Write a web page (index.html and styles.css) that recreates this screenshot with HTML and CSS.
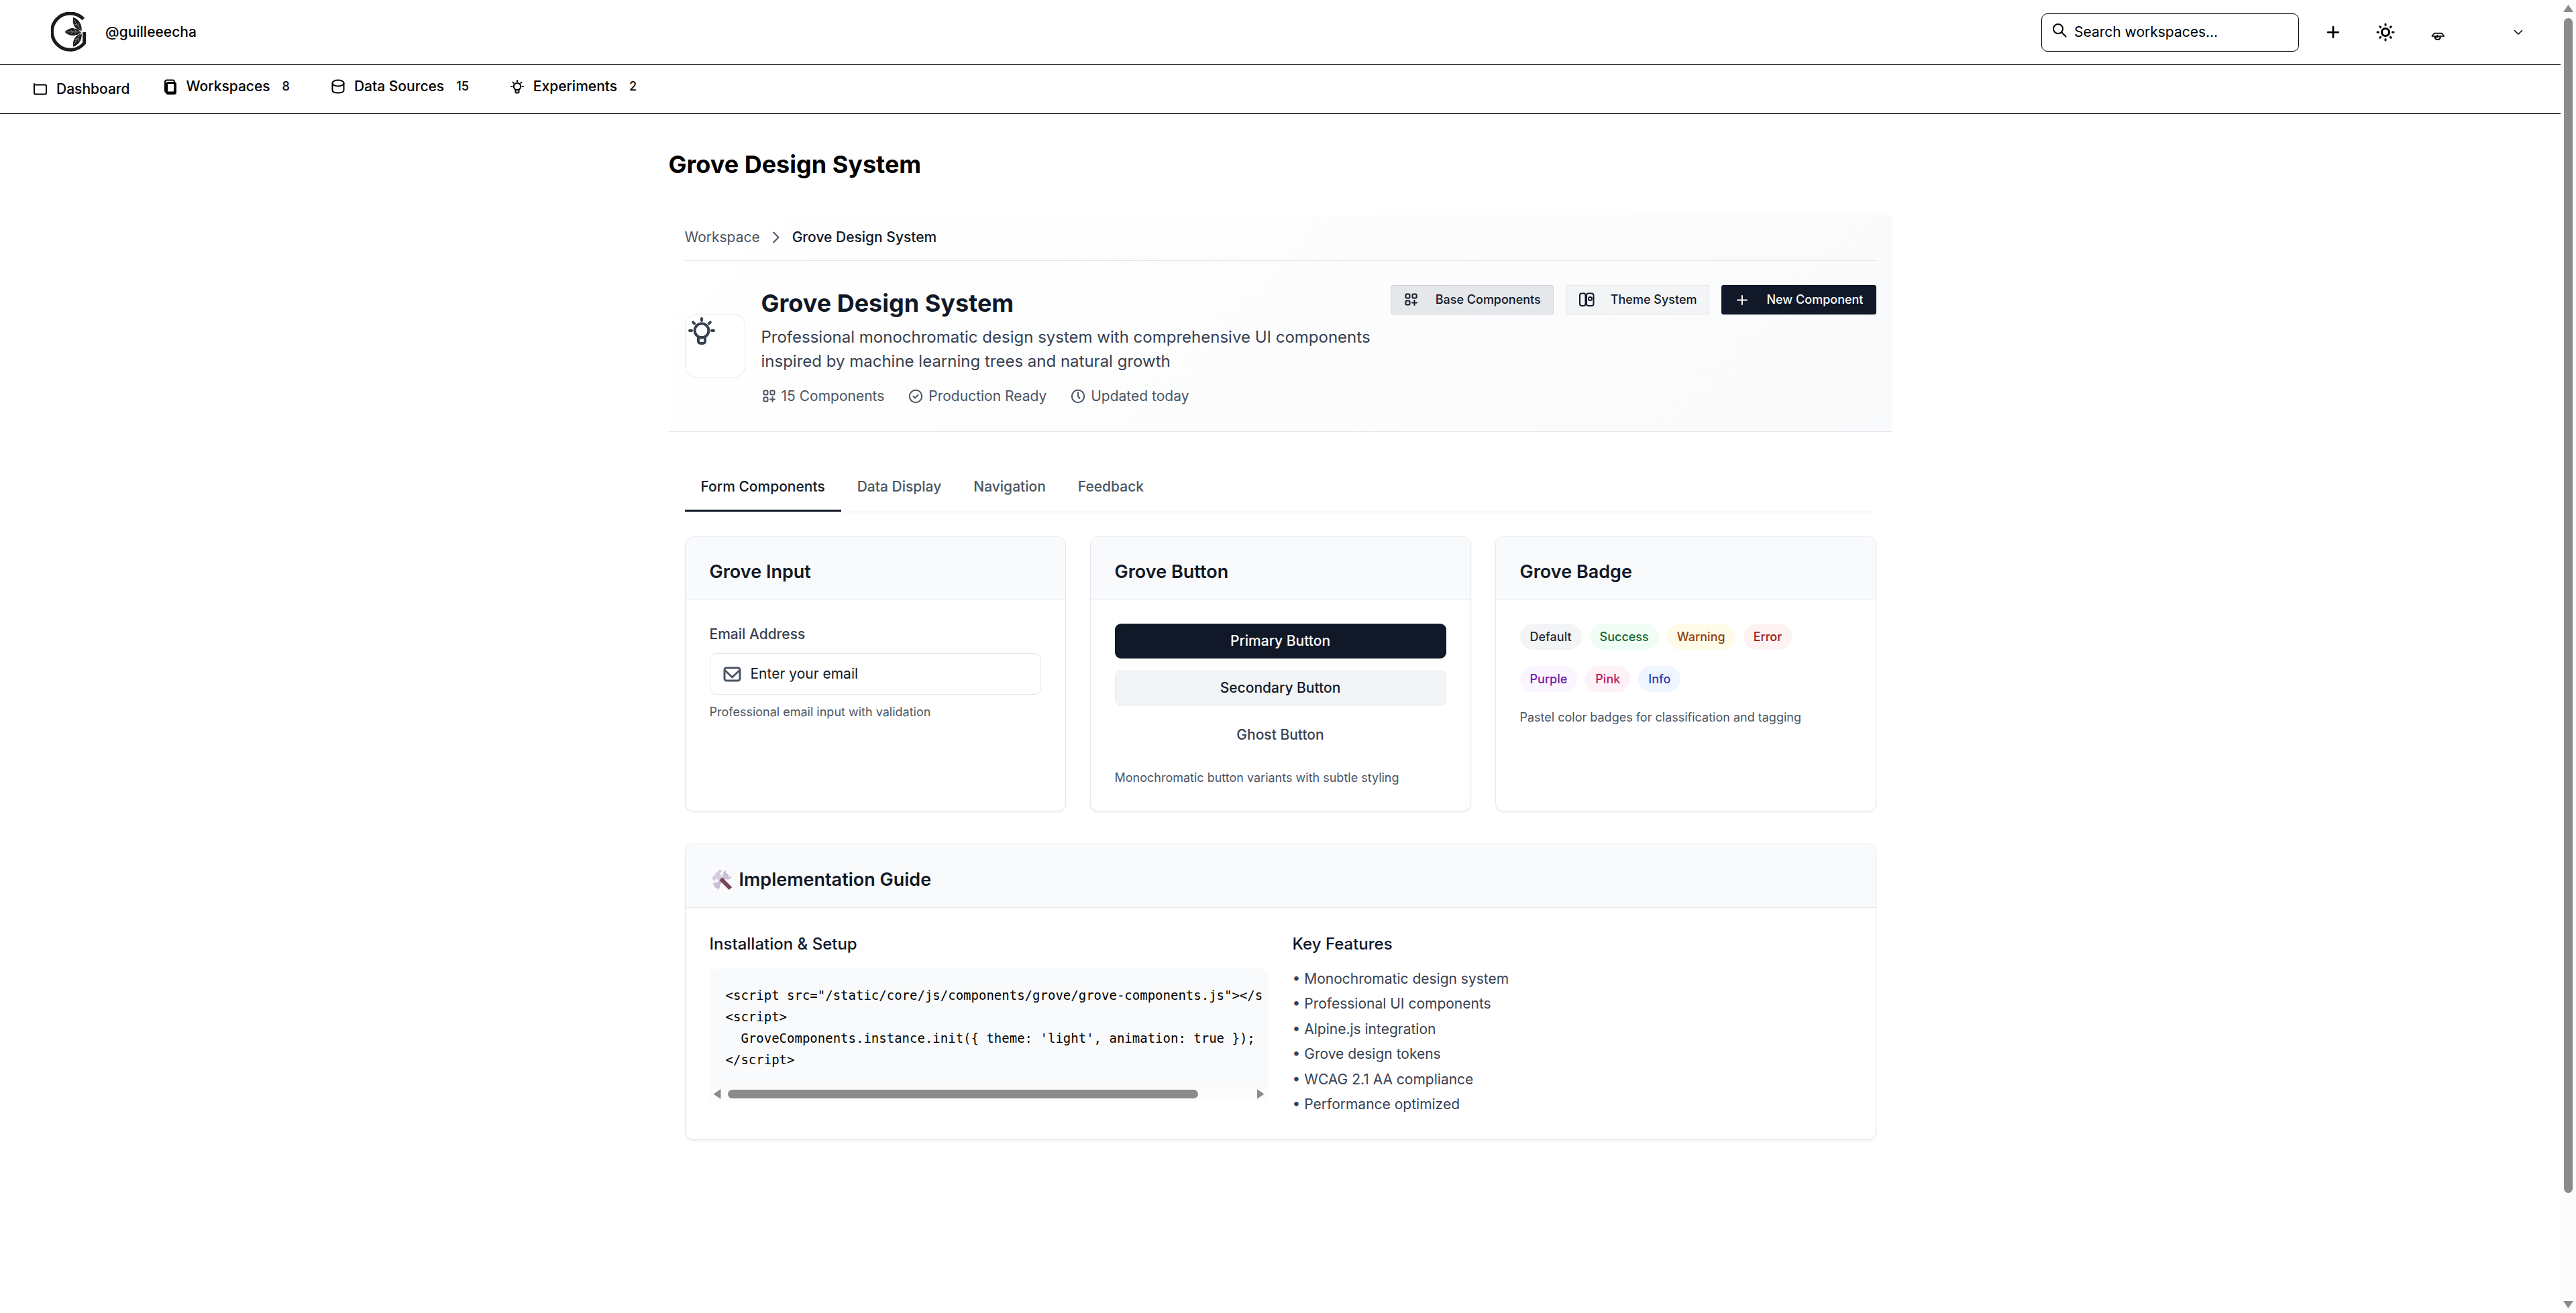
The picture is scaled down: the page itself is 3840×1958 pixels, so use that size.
FILE: index.html
```html
<!DOCTYPE html>
<html lang="en">
<head>
<meta charset="utf-8">
<title>Grove Design System</title>
<link rel="stylesheet" href="styles.css">
</head>
<body>
<svg class="sprite" aria-hidden="true">
  <symbol id="i-grid" viewBox="0 0 24 24"><rect x="3.500" y="3.500" width="6" height="6" rx="1.500"/><rect x="13.500" y="3.500" width="6" height="6" rx="1.500"/><rect x="3.500" y="13.500" width="6" height="6" rx="1.500"/><path d="M16.500 13v7M13 16.500h7"/></symbol>
  <symbol id="i-check" viewBox="0 0 24 24"><circle cx="11" cy="12" r="9.200"/><path d="M7.500 12l2.500 2.500 4.500-4.500"/></symbol>
  <symbol id="i-clock" viewBox="0 0 24 24"><circle cx="11" cy="12" r="9.200"/><path d="M11 6.500V12l2.500 3"/></symbol>
  <symbol id="i-bulb" viewBox="0 0 24 24"><circle cx="12" cy="12" r="5.200"/><path d="M9.500 17v3a1.500 1.500 0 0 0 1.500 1.500h2a1.500 1.500 0 0 0 1.500-1.500v-3zM12 3v1.500M3 12h1.500M19.500 12H21M5.600 5.800l1 1M18.400 5.800l-1 1"/></symbol>
  <symbol id="i-plus" viewBox="0 0 24 24"><path d="M12 3.500v17M3.500 12h17"/></symbol>
</svg>

<div class="page">
  <header class="topbar">
    <a class="brand" href="#">
      <svg class="logo" viewBox="48 24 160 180" aria-hidden="true">
        <path d="M194 55A82 82 0 1 0 198 163V114" fill="none" stroke="#1c1c1a" stroke-width="15"/>
        <path d="M148 47c24 10 40 28 38 61c-28-6-44-26-38-61zM110 113c22-24 52-22 74 2c-22 20-54 18-74-2zM148 180c26-10 40-30 38-61c-28 8-42 28-38 61z" fill="#1c1c1a"/>
        <path d="M153 58c8 18 18 32 30 46M154 78l12 4M172 72l-1 16M120 113h58M136 103l10 10-10 9M154 102l8 11-8 9M153 168c8-18 18-32 30-46M154 148l12-4M174 155l-2-16" fill="none" stroke="#c8c8c4" stroke-width="2"/>
      </svg>
      <span>@guilleeecha</span>
    </a>
    <div class="tools">
      <label class="search">
        <svg viewBox="0 0 24 24" class="icon" aria-hidden="true"><circle cx="10" cy="10" r="7"/><path d="M15 15l6.500 6.500"/></svg>
        <input type="search" placeholder="Search workspaces..." aria-label="Search workspaces">
      </label>
      <div class="actions">
        <button class="tool" aria-label="Create"><svg class="icon icon-bold"><use href="#i-plus"/></svg></button>
        <button class="tool" aria-label="Toggle theme">
          <svg viewBox="0 0 30 30" class="icon icon-sun"><circle cx="15" cy="15" r="5.500"/><path d="M15 3v1.500M15 25.500V27M3 15h1.500M25.500 15H27M6.800 6.800l.8.800M22.400 22.400l.8.800M6.800 23.200l.8-.8M22.400 7.600l.8-.8"/></svg>
        </button>
        <button class="tool" aria-label="Notifications">
          <svg viewBox="188 78 72 72" class="icon"><path d="M208 119h34l10 13h-54z" stroke-width="5"/><path d="M211 134c0 18 24 18 24 0M223 129v6h-6" stroke-width="7"/></svg>
        </button>
        <button class="user" aria-label="Account menu"><svg viewBox="0 0 24 24" class="icon icon-thin"><path d="M6.500 9.500l5.500 5.500 5.500-5.500"/></svg></button>
      </div>
    </div>
  </header>

  <nav class="nav" aria-label="Main">
    <a class="nav-item nav-home" href="#"><svg viewBox="0 0 24 24" class="icon"><path d="M3 4v13.500a2 2 0 0 0 2 2h14a2 2 0 0 0 2-2v-10a2 2 0 0 0-2-2H3"/></svg>Dashboard</a>
    <a class="nav-item" href="#"><svg viewBox="0 0 24 24" class="icon"><rect x="4" y="2.500" width="14" height="18" rx="2.500"/><rect x="6.500" y="6.500" width="13" height="16" rx="2" stroke-width="3"/></svg>Workspaces <span class="count">8</span></a>
    <a class="nav-item" href="#"><svg viewBox="0 0 24 24" class="icon"><path d="M3.500 6.500v11c0 2.500 3 4 8.500 4s8.500-1.500 8.500-4v-11"/><ellipse cx="12" cy="7" rx="8.500" ry="4.500"/></svg>Data Sources <span class="count">15</span></a>
    <a class="nav-item" href="#"><svg class="icon"><use href="#i-bulb"/></svg>Experiments <span class="count">2</span></a>
  </nav>

  <main class="main">
    <h1 class="page-title">Grove Design System</h1>

    <section class="banner">
      <nav class="crumbs" aria-label="Breadcrumb">
        <a href="#">Workspace</a>
        <svg viewBox="0 0 24 24" class="icon"><path d="M8 4.500l7.500 7.500L8 19.500"/></svg>
        <span class="crumb-current">Grove Design System</span>
      </nav>
      <div class="hero">
        <div class="hero-icon"><svg class="icon icon-hero"><use href="#i-bulb"/></svg></div>
        <div class="hero-text">
          <h2>Grove Design System</h2>
          <p class="lead">Professional monochromatic design system with comprehensive UI components inspired by machine learning trees and natural growth</p>
          <ul class="meta">
            <li><svg class="icon"><use href="#i-grid"/></svg>15 Components</li>
            <li><svg class="icon"><use href="#i-check"/></svg>Production Ready</li>
            <li><svg class="icon"><use href="#i-clock"/></svg>Updated today</li>
          </ul>
        </div>
        <div class="hero-actions">
          <button class="btn btn-base"><svg class="icon"><use href="#i-grid"/></svg>Base Components</button>
          <button class="btn btn-theme"><svg viewBox="0 0 24 24" class="icon"><rect x="2" y="2.500" width="8.500" height="18.500" rx="3"/><rect x="12" y="2.500" width="10.500" height="18.500" rx="3"/><circle cx="17.500" cy="10.500" r="2.500"/></svg>Theme System</button>
          <button class="btn btn-new"><svg viewBox="0 0 24 24" class="icon"><path d="M12 6v13M5 12.500h14"/></svg>New Component</button>
        </div>
      </div>
    </section>

    <div class="content">
      <div class="tabs" role="tablist">
        <button class="tab tab-active" role="tab" aria-selected="true">Form Components</button>
        <button class="tab" role="tab" aria-selected="false">Data Display</button>
        <button class="tab" role="tab" aria-selected="false">Navigation</button>
        <button class="tab" role="tab" aria-selected="false">Feedback</button>
      </div>

      <div class="cards">
        <section class="card">
          <h3 class="card-title">Grove Input</h3>
          <div class="card-body">
            <label class="field-label" for="email">Email Address</label>
            <div class="field">
              <svg viewBox="0 0 28 24" class="icon icon-mail" aria-hidden="true"><rect x="3" y="3" width="23" height="19" rx="3"/><path d="M4 7l10.500 10L25 7"/></svg>
              <input id="email" type="email" placeholder="Enter your email">
            </div>
            <p class="hint">Professional email input with validation</p>
          </div>
        </section>

        <section class="card">
          <h3 class="card-title">Grove Button</h3>
          <div class="card-body">
            <div class="stack">
              <button class="wide wide-primary">Primary Button</button>
              <button class="wide wide-secondary">Secondary Button</button>
              <button class="wide wide-ghost">Ghost Button</button>
            </div>
            <p class="hint hint-far">Monochromatic button variants with subtle styling</p>
          </div>
        </section>

        <section class="card">
          <h3 class="card-title">Grove Badge</h3>
          <div class="card-body">
            <div class="badges">
              <div class="badge-row">
                <span class="badge badge-default">Default</span>
                <span class="badge badge-success">Success</span>
                <span class="badge badge-warning">Warning</span>
                <span class="badge badge-error">Error</span>
              </div>
              <div class="badge-row">
                <span class="badge badge-purple">Purple</span>
                <span class="badge badge-pink">Pink</span>
                <span class="badge badge-info">Info</span>
              </div>
            </div>
            <p class="hint hint-far">Pastel color badges for classification and tagging</p>
          </div>
        </section>
      </div>

      <section class="card">
        <h3 class="card-title card-title-icon">
          <svg viewBox="0 0 36 34" class="emoji" aria-hidden="true">
            <path d="M8 28L27 9" stroke="#c3b8d3" stroke-width="5"/>
            <path d="M24 3a7 7 0 1 0 9 9l-5 1-3-3zM4 24a6 6 0 1 1 8 8l-1-4-3-3z" fill="#c9c0d8"/>
            <path d="M16 15l15 15" stroke="#7b4257" stroke-width="6"/>
            <path d="M3 14L14 2l5 1-4 5 4 5-6 6-3-4-4 4z" fill="#d5cee0"/>
          </svg>
          Implementation Guide
        </h3>
        <div class="card-body guide">
          <div class="guide-col">
            <h4>Installation &amp; Setup</h4>
            <div class="code">
<pre>&lt;script src="/static/core/js/components/grove/grove-components.js"&gt;&lt;/script&gt;
&lt;script&gt;
  GroveComponents.instance.init({ theme: 'light', animation: true });
&lt;/script&gt;</pre>
              <div class="hscroll" aria-hidden="true"><i class="arrow arrow-left"></i><div class="hscroll-track"><div class="hscroll-thumb"></div></div><i class="arrow arrow-right"></i></div>
            </div>
          </div>
          <div class="guide-col">
            <h4>Key Features</h4>
            <ul class="features">
              <li>• Monochromatic design system</li>
              <li>• Professional UI components</li>
              <li>• Alpine.js integration</li>
              <li>• Grove design tokens</li>
              <li>• WCAG 2.1 AA compliance</li>
              <li>• Performance optimized</li>
            </ul>
          </div>
        </div>
      </section>
    </div>
  </main>
</div>

<div class="vscroll" aria-hidden="true"><i class="arrow arrow-up"></i><div class="vscroll-track"><div class="vscroll-thumb"></div></div><i class="arrow arrow-down"></i></div>
</body>
</html>
```
FILE: styles.css
```css
* { box-sizing: border-box; }

body {
  margin: 0;
  display: grid;
  grid-template-columns: minmax(0, 1fr) 23px;
  min-height: 100vh;
  background: #fff;
  color: #000;
  font-family: Inter, "Liberation Sans", sans-serif;
  font-size: 21px;
  line-height: 32px;
}

h1, h2, h3, h4, p, ul, pre { margin: 0; padding: 0; }
ul { list-style: none; }
a { color: inherit; text-decoration: none; }
button, input { font: inherit; color: inherit; }
button { cursor: pointer; padding: 0; border: 0; background: none; }

.sprite { display: none; }

.icon {
  flex: none;
  width: 24px;
  height: 24px;
  fill: none;
  stroke: currentColor;
  stroke-width: 2;
  stroke-linecap: round;
  stroke-linejoin: round;
}
.icon-bold { stroke-width: 3; width: 22px; height: 22px; }
.icon-thin { stroke-width: 1.5; }
.icon-sun { width: 30px; height: 30px; stroke-width: 3; }

/* Top bar */
.topbar {
  display: flex;
  align-items: center;
  justify-content: space-between;
  height: 97px;
  padding: 0 48px;
  border-bottom: 1px solid #000;
}
.brand {
  display: flex;
  align-items: center;
  gap: 28px;
  padding: 0 28px;
  font-weight: 500;
}
.logo { width: 53px; height: 60px; }
.tools { display: flex; align-items: center; gap: 21px; }
.search {
  display: flex;
  align-items: center;
  gap: 10px;
  width: 384px;
  height: 57px;
  padding: 0 14px;
  border: 1px solid #000;
  border-radius: 9px;
}
.search .icon { margin-bottom: 6px; }
.search input {
  flex: 1;
  min-width: 0;
  padding: 0;
  border: 0;
  outline: 0;
  background: none;
}
.search input::placeholder { color: #000; opacity: 1; }
.actions { display: flex; gap: 18px; }
.tool {
  display: flex;
  align-items: center;
  justify-content: center;
  width: 60px;
  height: 60px;
}
.user {
  display: flex;
  align-items: center;
  justify-content: flex-end;
  width: 87px;
  padding-right: 3px;
}

/* Main navigation */
.nav {
  display: flex;
  gap: 48px;
  height: 73px;
  padding: 16px 48px;
  border-bottom: 1px solid #000;
  font-weight: 500;
}
.nav-item { display: flex; align-items: center; gap: 12px; height: 32px; padding-right: 6px; }
.nav-home { height: 40px; padding-right: 0; }
.count { margin: 0 6px; font-size: 18px; }

/* Page body */
.main { max-width: 1824px; margin: 0 auto; padding: 54px 0; }
.page-title { margin-bottom: 54px; font-size: 36px; line-height: 42px; font-weight: 700; }

.banner {
  padding: 0 24px 36px;
  border-bottom: 1px solid #e5e7eb;
  background: linear-gradient(135deg, #fff 0%, #f9fafb 100%);
  color: #111827;
}
.crumbs {
  display: flex;
  align-items: center;
  gap: 12px;
  padding: 18px 0;
  margin-bottom: 36px;
  border-bottom: 1px solid #e5e7eb;
  color: #4b5563;
}
.crumb-current { color: #111827; font-weight: 500; }

.hero { display: flex; gap: 24px; }
.hero-icon {
  flex: none;
  align-self: center;
  width: 90px;
  height: 96px;
  border: 1px solid #e5e7eb;
  border-radius: 18px;
  background: #fff;
  color: #374151;
}
.icon-hero { display: block; width: 48px; height: 48px; }
.hero-text { flex: 1; min-width: 0; }
.hero-text h2 { margin-bottom: 6px; font-size: 36px; line-height: 54px; font-weight: 700; }
.lead { margin-bottom: 18px; font-size: 24px; line-height: 36px; color: #374151; }
.meta { display: flex; gap: 36px; color: #4b5563; }
.meta li { display: flex; align-items: center; gap: 6px; }

.hero-actions { display: flex; align-items: flex-start; gap: 18px; }
.btn {
  display: flex;
  align-items: center;
  gap: 24px;
  height: 44px;
  padding: 0 18px;
  border: 1px solid;
  border-radius: 3px;
  font-size: 18px;
  font-weight: 500;
}
.btn-base { background: #e5e7eb; border-color: #d1d5db; }
.btn-theme { background: #f3f4f6; border-color: #e5e7eb; }
.btn-new { background: #111827; border-color: #111827; color: #fff; }

.content { padding: 48px 24px; color: #111827; }
.tabs { display: flex; margin-bottom: 36px; border-bottom: 1px solid #e5e7eb; }
.tab {
  padding: 18px 24px;
  border-bottom: 3px solid transparent;
  color: #4b5563;
  font-weight: 500;
  line-height: 32px;
}
.tab-active { border-color: #111827; color: #111827; }

/* Cards */
.cards {
  display: grid;
  grid-template-columns: repeat(3, minmax(0, 1fr));
  gap: 36px;
  margin-bottom: 48px;
}
.card {
  overflow: hidden;
  border: 1px solid #e5e7eb;
  border-radius: 12px;
  background: #fff;
  box-shadow: 0 2px 3px rgba(0, 0, 0, 0.05);
}
.card-title {
  padding: 36px 36px 24px;
  border-bottom: 1px solid #e5e7eb;
  background: #f9fafb;
  font-size: 27px;
  line-height: 32px;
  font-weight: 600;
}
.card-title-icon { display: flex; align-items: center; gap: 8px; line-height: 34px; }
.emoji { width: 36px; height: 34px; fill: none; }
.card-body { padding: 36px; }

.field-label { display: block; margin-bottom: 12px; color: #374151; font-weight: 500; }
.field {
  display: flex;
  align-items: center;
  gap: 14px;
  height: 62px;
  padding: 0 18px;
  border: 1px solid #e5e7eb;
  border-radius: 9px;
}
.field input { flex: 1; min-width: 0; padding: 0; border: 0; outline: 0; background: none; }
.field input::placeholder { color: #111827; opacity: 1; }
.icon-mail { width: 28px; color: #4b5563; stroke-width: 3; }
.hint { margin-top: 12px; font-size: 18px; line-height: 27px; color: #4b5563; }
.hint-far { margin-top: 24px; }

.stack { display: grid; gap: 18px; }
.wide { height: 52px; border-radius: 9px; font-weight: 500; }
.wide-primary { background: #111827; color: #fff; }
.wide-secondary { background: #f3f4f6; border: 1px solid #e5e7eb; }
.wide-ghost { color: #374151; }

.badges { display: grid; gap: 24px; }
.badge-row { display: flex; gap: 12px; }
.badge {
  padding: 6px 15px;
  border-radius: 20px;
  font-size: 18px;
  line-height: 27px;
  font-weight: 500;
}
.badge-default { background: #f3f4f6; color: #1f2937; }
.badge-success { background: #f0fdf4; color: #166534; }
.badge-warning { background: #fefce8; color: #92400e; }
.badge-error { background: #fef2f2; color: #991b1b; }
.badge-purple { background: #faf5ff; color: #6b21a8; }
.badge-pink { background: #fdf2f8; color: #be185d; }
.badge-info { background: #eff6ff; color: #1e40af; }

/* Implementation guide */
.guide { display: grid; grid-template-columns: repeat(2, minmax(0, 1fr)); gap: 36px; }
.guide h4 { margin-bottom: 18px; font-size: 24px; line-height: 36px; font-weight: 500; }
.code { overflow: hidden; border-radius: 12px 12px 0 0; background: #f9fafb; color: #000; }
.code pre {
  overflow: hidden;
  margin-right: 8px;
  padding: 24px 0 24px 24px;
  font-family: "DejaVu Sans Mono", monospace;
  font-size: 19px;
  line-height: 32px;
}
.features { display: grid; align-content: space-between; min-height: 219px; color: #374151; }

/* Scrollbars */
.hscroll { display: flex; align-items: center; height: 23px; padding: 0 6px; gap: 10px; background: #fcfcfc; }
.hscroll-track { flex: 1; }
.hscroll-thumb { width: 90%; height: 13px; border-radius: 7px; background: #8b8b8b; }
.vscroll {
  position: sticky;
  top: 0;
  display: flex;
  flex-direction: column;
  align-items: center;
  height: 100vh;
  padding: 7px 0;
  gap: 9px;
  background: #fcfcfc;
}
.vscroll-track { flex: 1; }
.vscroll-thumb { width: 13px; height: 92%; border-radius: 7px; background: #8b8b8b; }
.arrow { flex: none; background: #8b8b8b; }
.arrow-up, .arrow-down { width: 15px; height: 11px; }
.arrow-left, .arrow-right { width: 11px; height: 15px; }
.arrow-up { clip-path: polygon(50% 0, 100% 100%, 0 100%); }
.arrow-down { clip-path: polygon(0 0, 100% 0, 50% 100%); }
.arrow-left { clip-path: polygon(0 50%, 100% 0, 100% 100%); }
.arrow-right { clip-path: polygon(0 0, 100% 50%, 0 100%); }
```
